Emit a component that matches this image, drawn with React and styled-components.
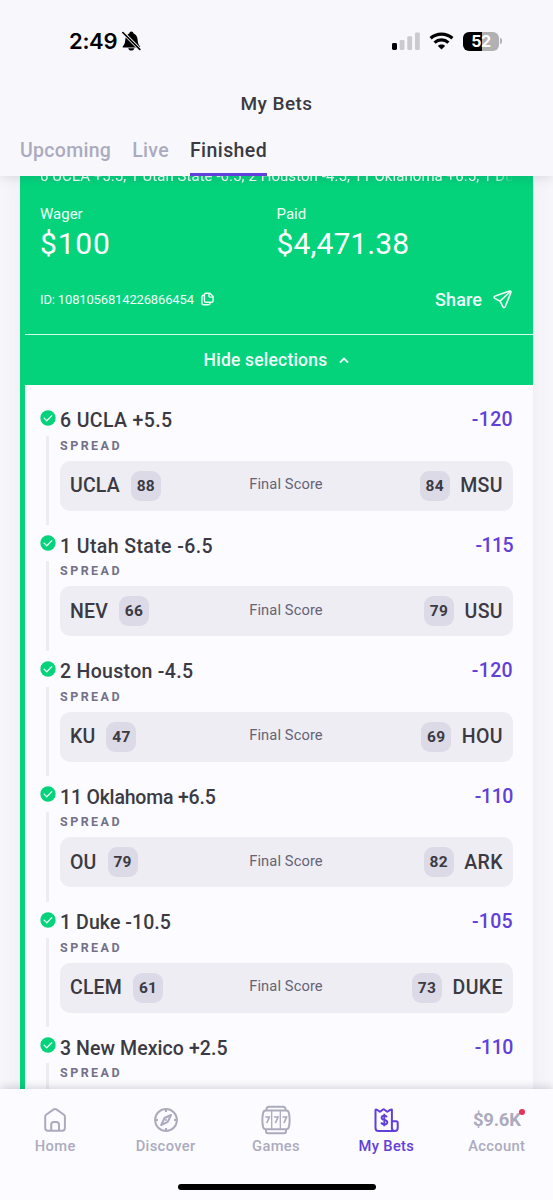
import React from "react";
import styled, { createGlobalStyle } from "styled-components";

const GlobalStyle = createGlobalStyle`
  * { box-sizing: border-box; }
  body { margin: 0; background: #f7f7fb; }
`;

const green = "#05d37c";
const purple = "#6140d9";
const ink = "#3b3a43";
const muted = "#acabbe";

const Screen = styled.div`
  display: flex;
  flex-direction: column;
  width: 553px;
  height: 1200px;
  overflow: hidden;
  background: #f7f7fb;
  color: ${ink};
  font-family: Roboto, "Liberation Sans", sans-serif;
  white-space: nowrap;
`;

const Header = styled.header`
  position: relative;
  z-index: 2;
  flex: none;
  height: 176px;
  display: flex;
  flex-direction: column;
  background: #f8f8fc;
  box-shadow: 0 1px 12px rgba(30, 25, 60, 0.15);
`;

const StatusBar = styled.div`
  height: 82px;
  display: flex;
  align-items: center;
  padding: 0 51px 0 69px;
`;

const Clock = styled.span`
  font: 600 22px/26px Inter, sans-serif;
  letter-spacing: -0.3px;
  color: #000;
  margin-right: 5px;
`;

const StatusIcons = styled.div`
  display: flex;
  align-items: center;
  gap: 9px;
  margin-left: auto;
`;

const Battery = styled.div`
  display: flex;
  align-items: center;
  gap: 1px;
`;

const BatteryBody = styled.div`
  width: 36px;
  height: 19px;
  border-radius: 6px;
  background: linear-gradient(90deg, #000 52%, #b1b1b3 52%);
  color: #fff;
  text-align: center;
  font: 700 16px/19px Inter, sans-serif;
  letter-spacing: -0.3px;
`;

const BatteryTip = styled.div`
  width: 2px;
  height: 6px;
  border-radius: 0 2px 2px 0;
  background: #b1b1b3;
`;

const PageTitle = styled.h1`
  margin: 10px 0 0;
  text-align: center;
  font-size: 19px;
  line-height: 24px;
  font-weight: 500;
  letter-spacing: 0.45px;
`;

const Tabs = styled.nav`
  display: flex;
  gap: 21px;
  padding-left: 20px;
  margin-top: auto;
`;

const Tab = styled.div`
  height: 38px;
  font-size: 19.5px;
  line-height: 26px;
  font-weight: 500;
  letter-spacing: ${(p) => p.$spacing}px;
  color: ${(p) => (p.$active ? ink : muted)};
  border-bottom: 3px solid ${(p) => (p.$active ? purple : "transparent")};
`;

const Content = styled.main`
  flex: 1;
  min-height: 0;
  overflow: hidden;
  padding: 0 20px;
`;

const Card = styled.article`
  height: 1100px;
  border-left: 5px solid ${green};
  background: #fcfbff;
  box-shadow: 0 0 22px rgba(30, 25, 60, 0.06);
`;

const Summary = styled.section`
  height: 158px;
  padding: 0 20px 0 15px;
  background: ${green};
  color: #edfff7;
  overflow: hidden;
`;

const Legs = styled.div`
  height: 20px;
  margin-top: -10px;
  font-size: 15px;
  line-height: 20px;
  letter-spacing: 0.06px;
  overflow: hidden;
  mask-image: linear-gradient(90deg, #000 96%, transparent 100%);
`;

const Amounts = styled.div`
  display: grid;
  grid-template-columns: 1fr 1fr;
  margin-top: 18px;
`;

const AmountLabel = styled.div`
  font-size: 15px;
  line-height: 20px;
`;

const AmountValue = styled.div`
  font-size: 30px;
  line-height: 36px;
  margin-top: 2px;
  letter-spacing: ${(p) => p.$spacing}px;
  color: #fff;
`;

const TicketRow = styled.div`
  display: flex;
  align-items: center;
  justify-content: space-between;
  height: 24px;
  margin-top: 25px;
`;

const TicketId = styled.div`
  display: flex;
  align-items: center;
  gap: 7px;
  font-size: 13px;
  letter-spacing: -0.15px;
`;

const Share = styled.div`
  display: flex;
  align-items: center;
  gap: 11px;
  padding-right: 1px;
  font-size: 18px;
  font-weight: 500;
  letter-spacing: 0.1px;
`;

const HideBar = styled.div`
  display: flex;
  align-items: center;
  justify-content: center;
  gap: 12px;
  height: 51px;
  padding-right: 5px;
  border-top: 1px solid #d7ffed;
  background: ${green};
  color: #f0fff8;
  font-size: 17.5px;
  font-weight: 500;
  letter-spacing: 0.2px;
`;

const Selections = styled.div`
  padding: 22.7px 20px 0 15px;
`;

const Selection = styled.div`
  display: flex;
  height: 125.5px;
`;

const Rail = styled.div`
  width: 15px;
  margin-right: 5px;
  display: flex;
  flex-direction: column;
  align-items: center;
  padding: 2px 0 8px;
`;

const RailLine = styled.div`
  flex: 1;
  width: 2.5px;
  margin-top: 10px;
  background: #edecf2;
`;

const Details = styled.div`
  flex: 1;
`;

const TitleRow = styled.div`
  display: flex;
  justify-content: space-between;
  font-size: 19.5px;
  line-height: 25px;
  font-weight: 500;
`;

const Pick = styled.span`
  position: relative;
  top: 0.6px;
  letter-spacing: ${(p) => p.$spacing}px;
`;

const Odds = styled.span`
  position: relative;
  top: -0.4px;
  color: ${purple};
  letter-spacing: ${(p) => p.$spacing}px;
`;

const Market = styled.div`
  margin-top: 5px;
  font-size: 12.5px;
  line-height: 16px;
  font-weight: 700;
  letter-spacing: 2.45px;
  color: #737188;
`;

const ScoreBox = styled.div`
  display: grid;
  grid-template-columns: 1fr auto 1fr;
  align-items: center;
  height: 50px;
  margin-top: 7px;
  padding: 0 10px;
  border-radius: 10px;
  background: #eeedf3;
`;

const Team = styled.div`
  display: flex;
  align-items: center;
  justify-content: ${(p) => (p.$away ? "flex-end" : "flex-start")};
  gap: ${(p) => (p.$away ? 10.5 : 11)}px;
  font-size: 19.5px;
  font-weight: 500;
  letter-spacing: ${(p) => (p.$away ? 0.4 : 0.15)}px;
`;

const Score = styled.span`
  width: 30px;
  height: 30px;
  border-radius: 9px;
  background: #dbdae6;
  text-align: center;
  font-size: 15.5px;
  line-height: 30px;
  font-weight: 700;
`;

const Status = styled.span`
  font-size: 14.7px;
  letter-spacing: 0.1px;
  color: #656375;
  padding: 0 1px 3px 0;
`;

const TabBar = styled.footer`
  position: relative;
  z-index: 2;
  flex: none;
  height: 111px;
  display: flex;
  flex-direction: column;
  align-items: center;
  background: #fcfbff;
  box-shadow: 0 -1px 9px rgba(30, 25, 60, 0.2);
`;

const NavItems = styled.nav`
  width: 552px;
  align-self: flex-start;
  display: grid;
  grid-template-columns: repeat(5, 1fr);
  padding-top: 16px;
`;

const NavItem = styled.div`
  display: flex;
  flex-direction: column;
  align-items: center;
  color: ${(p) => (p.$active ? purple : muted)};
  font-size: 14.7px;
  line-height: 20px;
  font-weight: 500;
  letter-spacing: 0.35px;
  svg { display: block; }
`;

const NavLabel = styled.span`
  margin-top: 1px;
`;

const Balance = styled.div`
  position: relative;
  height: 30px;
  line-height: 31px;
  font-size: 18.5px;
  font-weight: 700;
  letter-spacing: -0.25px;
`;

const Dot = styled.i`
  position: absolute;
  top: 4px;
  right: -4px;
  width: 6px;
  height: 6px;
  border-radius: 50%;
  background: #e6325a;
`;

const HomeIndicator = styled.div`
  width: 198px;
  height: 6px;
  margin-top: 28px;
  border-radius: 3px;
  background: #000;
`;

const BellOff = () => (
  <svg width="19" height="20" viewBox="0 0 19 20">
    <path d="M.9 15.200c1-1.300 2-2.300 2.200-5C3.300 5.800 5 3.400 7.200 2.600 7.500 1.300 8.300.6 9.400.6s1.900.7 2.200 2c2.500.8 4 3.200 4.200 7.600.2 2.700 1.200 3.600 2.100 5.100.4.700.1 1.300-.7 1.300H1.600c-.9 0-1.200-.6-.7-1.400zM6.200 17.200h6.200c-.4 1.500-1.600 2.300-3.100 2.300s-2.700-.8-3.100-2.300z" fill="#000" />
    <path d="M.9 1.400 17.800 18.300" stroke="#f8f8fc" strokeWidth="3.300" />
    <path d="M.8 1.500 17.800 18.400" stroke="#000" strokeWidth="1.600" strokeLinecap="round" />
  </svg>
);

const Signal = () => (
  <svg width="28" height="18" viewBox="0 0 28 18">
    <rect x="0" y="11" width="5" height="7" rx="1.400" fill="#000" />
    <g fill="#cbcbce">
      <rect x="7.700" y="8" width="4.800" height="10" rx="1.300" />
      <rect x="15.300" y="4.200" width="4.800" height="13.800" rx="1.300" />
      <rect x="23" y="0.500" width="4.800" height="17.500" rx="1.300" />
    </g>
  </svg>
);

const Wifi = () => (
  <svg width="25" height="18" viewBox="0 0 25 18" fill="none" stroke="#000" strokeWidth="3.200">
    <path d="M1.600 6.300C7.700.7 17.300.7 23.400 6.300" />
    <path d="M5.600 10.600c3.900-3.600 9.900-3.600 13.800 0" />
    <path d="M12.500 17.600 8.900 14c2-1.900 5.200-1.900 7.200 0z" fill="#000" stroke="none" />
  </svg>
);

const Check = () => (
  <svg width="16" height="16" viewBox="0 0 16 16">
    <circle cx="8" cy="8" r="7.700" fill={green} />
    <path d="m4.100 8.100 2.700 2.600 5-5.100" fill="none" stroke="#eafff5" strokeWidth="1.300" strokeLinecap="round" strokeLinejoin="round" />
  </svg>
);

const Copy = () => (
  <svg width="13" height="14" viewBox="0 0 13 14" fill="none" stroke="currentColor" strokeWidth="1.400" strokeLinejoin="round">
    <path d="M5 1.200h3.800l3.300 3.300v4.200c0 1-.7 1.600-1.600 1.600H5c-.9 0-1.600-.6-1.600-1.600V2.800c0-.9.700-1.600 1.600-1.600z" />
    <path d="M8 1.300v2.600c0 .8.400 1.200 1.200 1.200H12M3.400 3.200H2.600c-1 0-1.700.7-1.700 1.600V11c0 1 .7 1.800 1.700 1.800h4.800c1 0 1.700-.7 1.700-1.700v-.8" />
  </svg>
);

const Plane = () => (
  <svg width="19" height="19" viewBox="0 0 19 19" fill="none" stroke="currentColor" strokeWidth="1.600" strokeLinejoin="round" strokeLinecap="round">
    <path d="M16.700 1.100 2.200 6c-1.300.5-1.400 1.700-.3 2.400l4.500 2.500c.6.300.9.700 1.200 1.300l2.200 4.500c.6 1.200 1.900 1.200 2.500-.2L17.900 2.500c.3-1-.3-1.700-1.200-1.400z" />
    <path d="m7 11.100 9.300-8.600" />
  </svg>
);

const Chevron = () => (
  <svg width="10" height="7" viewBox="0 0 10 7" fill="none" stroke="currentColor" strokeWidth="1.800">
    <path d="m.9 5.700 4.100-4.100 4.100 4.100" />
  </svg>
);

const HomeIcon = () => (
  <svg width="30" height="30" viewBox="0 0 30 30" fill="none" stroke="currentColor" strokeWidth="2" strokeLinejoin="round">
    <path d="M5.200 11.600c0-.8.300-1.300.9-1.800l7.600-5.400c1-.7 1.800-.7 2.700 0L24 9.800c.6.500.9 1 .9 1.800v11.500c0 1.700-.9 2.600-2.600 2.600H7.800c-1.700 0-2.600-.9-2.600-2.600z" />
    <path d="M11.200 25.500v-5.700c0-1.800 1-2.800 2.600-2.800h2.600c1.600 0 2.600 1 2.600 2.800v5.700" />
  </svg>
);

const CompassIcon = () => (
  <svg width="30" height="30" viewBox="0 0 30 30" fill="none" stroke="currentColor" strokeWidth="2" strokeLinejoin="round">
    <circle cx="15" cy="15" r="10.900" />
    <path d="m20 10-6.500 3-3.300 7 6.600-3.100zM15 4v3M15 23v3M4 15h3M23 15h3M14.400 14.400l1.200 1.200" />
  </svg>
);

const SlotsIcon = () => (
  <svg width="30" height="30" viewBox="0 0 30 30" fill="none" stroke="currentColor" strokeWidth="2">
    <path d="M5.300 5.300C5.200 2.800 6.200 1.800 8.400 1.800h13.200c2.200 0 3.200 1 3.100 3.500M4.700 5.600h20.600c1.600 0 2.200.7 2.600 2.400 1 4.700 1 9.400 0 14-.4 1.600-1 2.300-2.600 2.300H4.700c-1.600 0-2.200-.7-2.600-2.300-1-4.600-1-9.300 0-14 .4-1.700 1-2.400 2.600-2.400zM5 25v1.500c0 1.200.6 1.800 1.800 1.800h16.400c1.200 0 1.800-.6 1.800-1.800V25" />
    <path d="M10.700 5.500v18.700M19.300 5.500v18.700" strokeWidth="1.300" />
    <path d="M4.300 12h4l-2.500 6M13 12h4l-2.500 6M21.500 12h4L23 18" strokeWidth="1.700" />
  </svg>
);

const BetsIcon = () => (
  <svg width="30" height="30" viewBox="0 0 30 30" fill="none" stroke="currentColor" strokeWidth="2" strokeLinejoin="round">
    <path d="M5 4.500c1.300.2 2.200 1.200 3.200 1.900.5.300 1 .3 1.500-.1l2-1.600c.6-.5 1.200-.5 1.800 0l2 1.600c.5.400 1 .4 1.500 0 1-.8 1.900-1.700 3.200-1.900.5-.1.700.2.700.7v11.200h4.300c1 0 1.500.5 1.500 1.500v5.300c0 2-.9 3-2.900 3H7.500c-2 0-3-1-3-3V5c0-.3.200-.5.500-.5zM20.900 16.200v6.900c0 1.900 1 3 2.900 3" />
    <path d="M16 12.300c-.4-1.100-1.300-1.600-2.800-1.600-1.600 0-2.600.7-2.600 2 0 3.200 5.700 1.300 5.700 4.500 0 1.400-1.100 2.200-2.900 2.200-1.600 0-2.700-.7-3.100-2M13.300 8.700v12.600" strokeWidth="1.900" />
  </svg>
);

const selections = [
  { pick: "6 UCLA +5.5", tracking: 0.38, odds: "-120", oddsTracking: 0.35, home: ["UCLA", 88], away: ["MSU", 84] },
  { pick: "1 Utah State -6.5", tracking: 0.4, odds: "-115", oddsTracking: -0.6, home: ["NEV", 66], away: ["USU", 79] },
  { pick: "2 Houston -4.5", tracking: 0.31, odds: "-120", oddsTracking: 0.35, home: ["KU", 47], away: ["HOU", 69] },
  { pick: "11 Oklahoma +6.5", tracking: -0.2, odds: "-110", oddsTracking: -0.4, home: ["OU", 79], away: ["ARK", 82] },
  { pick: "1 Duke -10.5", tracking: 0.08, odds: "-105", oddsTracking: 0.3, home: ["CLEM", 61], away: ["DUKE", 73] },
  { pick: "3 New Mexico +2.5", tracking: 0.08, odds: "-110", oddsTracking: -0.4 },
];

export default function App() {
  return (
    <Screen>
      <GlobalStyle />
      <Header>
        <StatusBar>
          <Clock>2:49</Clock>
          <BellOff />
          <StatusIcons>
            <Signal />
            <Wifi />
            <Battery>
              <BatteryBody>52</BatteryBody>
              <BatteryTip />
            </Battery>
          </StatusIcons>
        </StatusBar>
        <PageTitle>My Bets</PageTitle>
        <Tabs>
          <Tab $spacing={0.3}>Upcoming</Tab>
          <Tab $spacing={0.3}>Live</Tab>
          <Tab $active $spacing={0.42}>Finished</Tab>
        </Tabs>
      </Header>
      <Content>
        <Card>
          <Summary>
            <Legs>6 UCLA +5.5, 1 Utah State -6.5, 2 Houston -4.5, 11 Oklahoma +6.5, 1 Du</Legs>
            <Amounts>
              <div>
                <AmountLabel>Wager</AmountLabel>
                <AmountValue $spacing={0.8}>$100</AmountValue>
              </div>
              <div>
                <AmountLabel>Paid</AmountLabel>
                <AmountValue $spacing={0.1}>$4,471.38</AmountValue>
              </div>
            </Amounts>
            <TicketRow>
              <TicketId>ID: 1081056814226866454 <Copy /></TicketId>
              <Share>Share <Plane /></Share>
            </TicketRow>
          </Summary>
          <HideBar>Hide selections <Chevron /></HideBar>
          <Selections>
            {selections.map(({ pick, tracking, odds, oddsTracking, home, away }) => (
              <Selection key={pick}>
                <Rail>
                  <Check />
                  <RailLine />
                </Rail>
                <Details>
                  <TitleRow>
                    <Pick $spacing={tracking}>{pick}</Pick>
                    <Odds $spacing={oddsTracking}>{odds}</Odds>
                  </TitleRow>
                  <Market>SPREAD</Market>
                  {home && (
                    <ScoreBox>
                      <Team>{home[0]}<Score>{home[1]}</Score></Team>
                      <Status>Final Score</Status>
                      <Team $away><Score>{away[1]}</Score>{away[0]}</Team>
                    </ScoreBox>
                  )}
                </Details>
              </Selection>
            ))}
          </Selections>
        </Card>
      </Content>
      <TabBar>
        <NavItems>
          <NavItem><HomeIcon /><NavLabel>Home</NavLabel></NavItem>
          <NavItem><CompassIcon /><NavLabel>Discover</NavLabel></NavItem>
          <NavItem><SlotsIcon /><NavLabel>Games</NavLabel></NavItem>
          <NavItem $active><BetsIcon /><NavLabel>My Bets</NavLabel></NavItem>
          <NavItem><Balance>$9.6K<Dot /></Balance><NavLabel>Account</NavLabel></NavItem>
        </NavItems>
        <HomeIndicator />
      </TabBar>
    </Screen>
  );
}
